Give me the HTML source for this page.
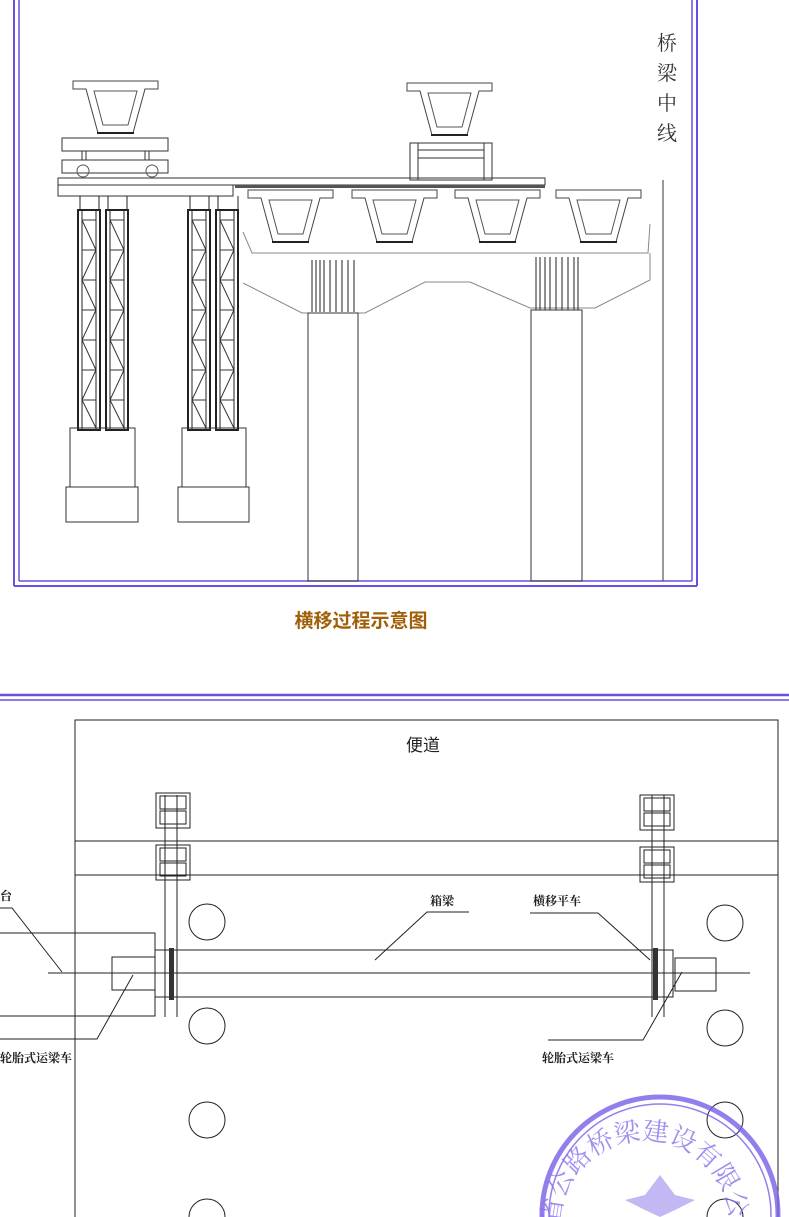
<!DOCTYPE html>
<html><head><meta charset="utf-8"><style>
html,body{margin:0;padding:0;background:#fff;width:789px;height:1217px;overflow:hidden;}
svg{display:block;}
</style></head><body>
<svg width="789" height="1217" viewBox="0 0 789 1217" xmlns="http://www.w3.org/2000/svg" font-family="'Liberation Serif','Noto Serif CJK SC',serif">
<defs>
<g id="gd">
<path d="M0,0 H85 V8 H72 L60,52 H25 L13,8 H0 Z" fill="#fff" stroke="#444" stroke-width="1"/>
<path d="M21,10 H64 L55,44 H30 Z" fill="none" stroke="#555" stroke-width="1"/>
<line x1="24" y1="52" x2="61" y2="52" stroke="#222" stroke-width="2"/>
</g>
<g id="tr">
<rect x="0" y="0" width="22" height="220" fill="none" stroke="#222" stroke-width="2"/>
<line x1="4" y1="0" x2="4" y2="220" stroke="#222"/><line x1="18" y1="0" x2="18" y2="220" stroke="#222"/>
<path d="M4,10 H18 M4,40 H18 M4,70 H18 M4,100 H18 M4,130 H18 M4,160 H18 M4,190 H18 M4,10 L18,40 L4,70 L18,100 L4,130 L18,160 L4,190 L18,218" stroke="#333" fill="none"/>
</g>
<g id="cl">
<rect x="0" y="0" width="34" height="35" fill="none" stroke="#222"/>
<rect x="4" y="3" width="26" height="13" fill="none" stroke="#222"/>
<rect x="4" y="18" width="26" height="13" fill="none" stroke="#222"/>
</g>
<path id="arc" d="M575,1230 A85,85 0 0 1 745,1230"/>
</defs>
<g stroke="#6a4fe0" fill="none">
<line x1="14" y1="0" x2="14" y2="586" stroke-width="2"/><line x1="19" y1="0" x2="19" y2="581" stroke-width="1.5"/>
<line x1="697" y1="0" x2="697" y2="586" stroke-width="2"/><line x1="692" y1="0" x2="692" y2="581" stroke-width="1.5"/>
<line x1="14" y1="586" x2="697" y2="586" stroke-width="2"/><line x1="19" y1="581" x2="692" y2="581" stroke-width="1.5"/>
</g>
<use href="#gd" x="73" y="81"/>
<rect x="62" y="138" width="106" height="13" fill="none" stroke="#333"/>
<rect x="62" y="160" width="106" height="13" fill="none" stroke="#333"/>
<rect x="82" y="151" width="4" height="9" fill="none" stroke="#333"/><rect x="145" y="151" width="4" height="9" fill="none" stroke="#333"/>
<circle cx="83" cy="171" r="6" fill="none" stroke="#555"/><circle cx="152" cy="171" r="6" fill="none" stroke="#555"/>
<rect x="58" y="178" width="487" height="7" fill="none" stroke="#333"/>
<rect x="58" y="185" width="175" height="11" fill="none" stroke="#333"/>
<rect x="235" y="185" width="310" height="3" fill="#555"/>
<use href="#tr" x="78" y="210"/><use href="#tr" x="106" y="210"/>
<use href="#tr" x="188" y="210"/><use href="#tr" x="216" y="210"/>
<g stroke="#222"><path d="M80,196 V210 M99,196 V210 M108,196 V210 M127,196 V210 M190,196 V210 M209,196 V210 M218,196 V210 M238,196 V210"/></g>
<rect x="70" y="428" width="65" height="59" fill="none" stroke="#333"/>
<rect x="66" y="487" width="72" height="35" fill="none" stroke="#333"/>
<rect x="182" y="428" width="64" height="59" fill="none" stroke="#333"/>
<rect x="178" y="487" width="71" height="35" fill="none" stroke="#333"/>
<use href="#gd" x="407" y="83"/>
<rect x="410" y="143" width="82" height="37" fill="none" stroke="#333"/>
<rect x="418" y="143" width="66" height="37" fill="none" stroke="#333"/>
<path d="M418,150 H484 M418,158 H484" stroke="#333"/>
<g stroke="#888" fill="none"><path d="M243,232 L252,253 H648 L650,224 M243,283 L302,313 H365 L425,282 H470 L530,308 H595 L650,280 V253"/></g>
<use href="#gd" x="248" y="190"/><use href="#gd" x="352" y="190"/><use href="#gd" x="455" y="190"/><use href="#gd" x="556" y="190"/>
<g stroke="#222"><path d="M312,260 V312 M316,260 V312 M320,260 V312 M324,260 V312 M330,260 V312 M336,260 V312 M342,260 V312 M348,260 V312 M354,260 V312 M536,257 V310 M540,257 V310 M545,257 V310 M550,257 V310 M556,257 V310 M562,257 V310 M568,257 V310 M574,257 V310 M578,257 V310"/></g>
<rect x="308" y="313" width="50" height="268" fill="none" stroke="#333"/>
<rect x="531" y="310" width="51" height="271" fill="none" stroke="#333"/>
<line x1="663" y1="180" x2="663" y2="581" stroke="#333"/>
<g font-size="20" fill="#333" text-anchor="middle"><text x="667" y="50">桥</text><text x="667" y="80">梁</text><text x="667" y="110">中</text><text x="667" y="140">线</text></g>
<text x="361" y="627" text-anchor="middle" font-family="'Liberation Sans','Noto Sans CJK SC',sans-serif" font-size="19" font-weight="bold" fill="#a0600a">横移过程示意图</text>
<line x1="0" y1="695" x2="789" y2="695" stroke="#6a4fe0" stroke-width="2.5"/>
<line x1="0" y1="700" x2="789" y2="700" stroke="#6a4fe0" stroke-width="1.5"/>
<g stroke="#222" fill="none">
<path d="M75,1217 V720 H778 V1217"/>
<path d="M75,841 H778 M75,875 H778"/>
<path d="M165,795 V1017 M177,795 V1017 M652,795 V1017 M664,795 V1017"/>
<rect x="155" y="950" width="518" height="47"/>
<line x1="48" y1="973" x2="750" y2="973"/>
<path d="M0,933 H155 V1016 H0"/>
<rect x="112" y="957" width="43" height="33"/><rect x="675" y="958" width="41" height="33"/>
<circle cx="207" cy="922" r="18"/><circle cx="207" cy="1026" r="18"/><circle cx="207" cy="1120" r="18"/><circle cx="207" cy="1217" r="18"/>
<circle cx="725" cy="923" r="18"/><circle cx="725" cy="1028" r="18"/><circle cx="725" cy="1120" r="18"/><circle cx="725" cy="1217" r="18"/>
<path d="M0,1039 H97 L133,975 M0,908 H12 L62,972 M469,912 H427 L375,960 M530,913 H598 L650,960 M548,1040 H643 L682,972"/>
</g>
<use href="#cl" x="156" y="793"/><use href="#cl" x="156" y="845"/>
<use href="#cl" x="640" y="795"/><use href="#cl" x="640" y="847"/>
<rect x="169" y="948" width="5" height="52" fill="#333"/><rect x="653" y="948" width="5" height="52" fill="#333"/>
<text x="423" y="751" text-anchor="middle" font-size="17" fill="#222" font-family="'Liberation Sans','Noto Sans CJK SC',sans-serif">便道</text>
<g font-size="12" font-weight="bold" fill="#222">
<text x="0" y="900">台</text><text x="430" y="905">箱梁</text><text x="533" y="905">横移平车</text>
<text x="0" y="1062">轮胎式运梁车</text><text x="542" y="1062">轮胎式运梁车</text>
</g>
<g stroke="#7a5ee8" fill="none" opacity="0.8">
<circle cx="660" cy="1215" r="118" stroke-width="5"/>
<circle cx="660" cy="1215" r="111" stroke-width="1.5"/>
</g>
<text font-size="26" fill="#8a72ea" opacity="0.8" transform="translate(-15,-5) scale(1.0)"><textPath href="#arc" startOffset="0">省公路桥梁建设有限公司</textPath></text>
<path d="M645,1195 L660,1175 L675,1195 L695,1200 L675,1210 L660,1217 L645,1210 L625,1200 Z" fill="#8a72ea" opacity="0.5"/>
</svg>
</body></html>
